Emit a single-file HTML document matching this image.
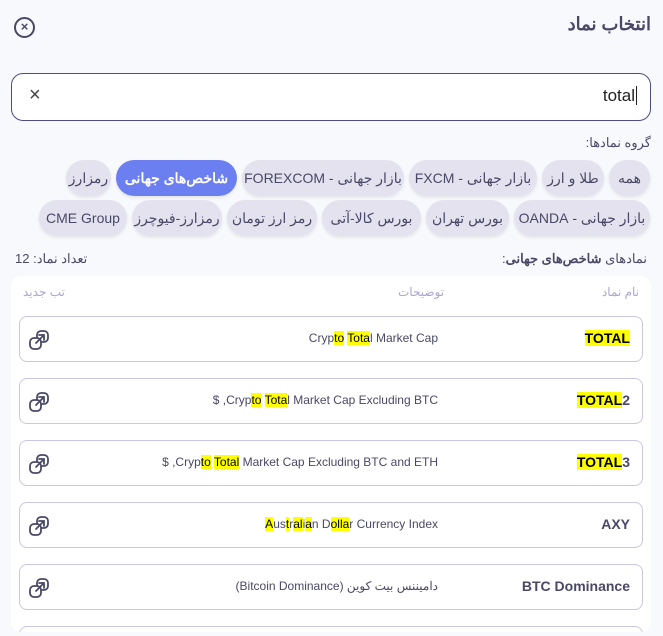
<!DOCTYPE html>
<html style="height:636px;overflow:hidden"><head><meta charset="utf-8"><style>
*{box-sizing:border-box;margin:0;padding:0}
body{width:663px;height:636px;background:#f8f9fd;font-family:"Liberation Sans","Noto Sans CJK SC",sans-serif;color:#4a4866;position:relative;overflow:hidden}
.a{position:absolute}
.title{right:12px;top:14px;font-size:18px;font-weight:bold;color:#4a4866}
.close{left:14px;top:17px;width:21px;height:21px;border:2px solid #4a4866;border-radius:50%;font-size:13px;line-height:16px;text-align:center;font-weight:bold}
.inp{left:11px;top:73px;width:640px;height:48px;border:1.5px solid #4d4a85;border-radius:12px;background:#fff}
.chip{height:36px;border-radius:18px;background:#e3e2ee;font-size:14px;color:#4a4866;line-height:36px;text-align:center;direction:rtl;white-space:nowrap;box-shadow:0 2px 3px rgba(0,0,0,.08)}
.act{background:#6b7ff0;color:#fff;font-weight:bold}
.tbl{left:11px;top:276px;width:640px;height:356px;background:#fff;border-radius:10px}
.hd{font-size:12px;color:#aaa6cc;top:285px}
.row{left:19px;width:624px;height:46px;border:1px solid #cac7e2;border-radius:8px;background:#fff}
.sym{position:absolute;right:12px;top:13px;font-size:14px;font-weight:bold;color:#4a4866;direction:ltr}
.desc{position:absolute;right:204px;top:14px;font-size:12px;color:#4a4866;white-space:nowrap}
.ic{position:absolute;left:8px;top:12px}
mark{background:#ffff00;color:#000}
</style></head><body>
<div class="a title">انتخاب نماد</div>
<div class="a close">×</div>
<div class="a inp"><span class="a" style="left:17px;top:10px;font-size:20px;color:#444">×</span><span class="a" style="right:13px;top:12px;font-size:17px;color:#222">total<span style="border-left:1px solid #222;margin-left:1px"></span></span></div>
<div class="a" style="right:12px;top:135px;font-size:13px;direction:rtl">گروه نمادها:</div>

<div class="a chip" style="left:609px;top:160px;width:41px">همه</div>
<div class="a chip" style="left:542px;top:160px;width:62px">طلا و ارز</div>
<div class="a chip" style="left:409px;top:160px;width:128px">بازار جهانی - FXCM</div>
<div class="a chip" style="left:242px;top:160px;width:162px">بازار جهانی - FOREXCOM</div>
<div class="a chip act" style="left:116px;top:160px;width:121px">شاخص‌های جهانی</div>
<div class="a chip" style="left:66px;top:160px;width:45px">رمزارز</div>
<div class="a chip" style="left:514px;top:200px;width:136px">بازار جهانی - OANDA</div>
<div class="a chip" style="left:426px;top:200px;width:83px">بورس تهران</div>
<div class="a chip" style="left:322px;top:200px;width:99px">بورس کالا-آتی</div>
<div class="a chip" style="left:227px;top:200px;width:90px">رمز ارز تومان</div>
<div class="a chip" style="left:132px;top:200px;width:90px">رمزارز-فیوچرز</div>
<div class="a chip" style="left:39px;top:200px;width:88px">CME Group</div>

<div class="a" style="right:16px;top:251px;font-size:13px;direction:rtl">نمادهای <b>شاخص‌های جهانی</b>:</div>
<div class="a" style="left:15px;top:251px;font-size:13px;direction:rtl">تعداد نماد: 12</div>

<div class="a tbl"></div>
<div class="a hd" style="right:24px">نام نماد</div>
<div class="a hd" style="left:398px">توضیحات</div>
<div class="a hd" style="left:23px">تب جدید</div>

<div class="a row" style="top:316px"><span class="sym"><mark>TOTAL</mark></span><span class="desc">Cryp<mark>to</mark> <mark>Tota</mark>l Market Cap</span><svg class="ic" width="22" height="22" viewBox="0 0 22 22" fill="none" stroke="#4a4866" stroke-width="1.8" stroke-linecap="round"><rect x="9" y="2" width="11" height="11" rx="4"/><rect x="2" y="9" width="11" height="11" rx="4" fill="#fff"/><path d="M8 14L16 6M11 6h5v5"/></svg></div>
<div class="a row" style="top:378px"><span class="sym"><mark>TOTAL</mark>2</span><span class="desc">$ ,Cryp<mark>to</mark> <mark>Tota</mark>l Market Cap Excluding BTC</span><svg class="ic" width="22" height="22" viewBox="0 0 22 22" fill="none" stroke="#4a4866" stroke-width="1.8" stroke-linecap="round"><rect x="9" y="2" width="11" height="11" rx="4"/><rect x="2" y="9" width="11" height="11" rx="4" fill="#fff"/><path d="M8 14L16 6M11 6h5v5"/></svg></div>
<div class="a row" style="top:440px"><span class="sym"><mark>TOTAL</mark>3</span><span class="desc">$ ,Cryp<mark>to</mark> <mark>Total</mark> Market Cap Excluding BTC and ETH</span><svg class="ic" width="22" height="22" viewBox="0 0 22 22" fill="none" stroke="#4a4866" stroke-width="1.8" stroke-linecap="round"><rect x="9" y="2" width="11" height="11" rx="4"/><rect x="2" y="9" width="11" height="11" rx="4" fill="#fff"/><path d="M8 14L16 6M11 6h5v5"/></svg></div>
<div class="a row" style="top:502px"><span class="sym">AXY</span><span class="desc"><mark>A</mark>us<mark>t</mark>r<mark>al</mark>i<mark>a</mark>n D<mark>olla</mark>r Currency Index</span><svg class="ic" width="22" height="22" viewBox="0 0 22 22" fill="none" stroke="#4a4866" stroke-width="1.8" stroke-linecap="round"><rect x="9" y="2" width="11" height="11" rx="4"/><rect x="2" y="9" width="11" height="11" rx="4" fill="#fff"/><path d="M8 14L16 6M11 6h5v5"/></svg></div>
<div class="a row" style="top:564px"><span class="sym">BTC Dominance</span><span class="desc" style="direction:rtl">دامیننس بیت کوین (Bitcoin Dominance)</span><svg class="ic" width="22" height="22" viewBox="0 0 22 22" fill="none" stroke="#4a4866" stroke-width="1.8" stroke-linecap="round"><rect x="9" y="2" width="11" height="11" rx="4"/><rect x="2" y="9" width="11" height="11" rx="4" fill="#fff"/><path d="M8 14L16 6M11 6h5v5"/></svg></div>
<div class="a row" style="top:626px;height:8px;border-bottom:none;border-radius:8px 8px 0 0"></div>
<div class="a" style="left:0;top:632px;width:663px;height:4px;background:#f8f9fd"></div>
</body></html>
